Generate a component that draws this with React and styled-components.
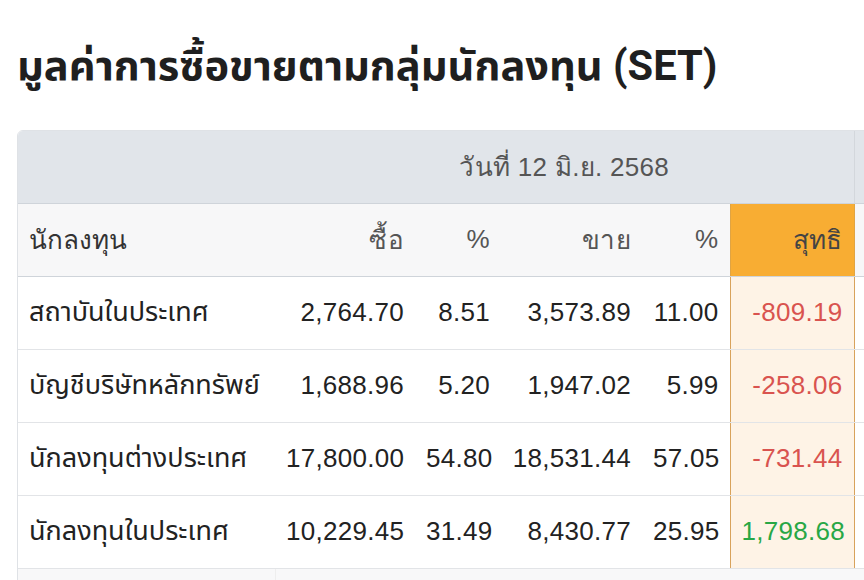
import React from 'react';
import styled, { createGlobalStyle } from 'styled-components';

const GlobalStyle = createGlobalStyle`
  html, body {
    margin: 0;
    padding: 0;
    background: #fff;
    overflow: hidden;
  }
  body {
    font-family: "Liberation Sans", "Noto Sans", sans-serif;
    color: #212529;
  }
`;

const Page = styled.div`
  width: 864px;
  height: 580px;
  overflow: hidden;
  padding: 0 0 0 17px;
  box-sizing: border-box;
`;

const Title = styled.h1`
  margin: 0;
  padding: 36px 0 0;
  height: 130px;
  box-sizing: border-box;
  font-family: Roboto, "Noto Sans Thai", sans-serif;
  font-size: 41.6px;
  font-weight: 700;
  color: #1f1f1f;
  line-height: 60px;
  white-space: nowrap;
`;

const Card = styled.div`
  width: 1000px;
  border: 1px solid #dfe2e6;
  border-radius: 6px;
  overflow: hidden;
`;

const Table = styled.table`
  border-collapse: collapse;
  table-layout: fixed;
  width: 1000px;
  font-size: 26px;
  letter-spacing: 0.3px;
`;

const Cell = styled.td`
  height: 73px;
  padding: 0 11px;
  text-align: right;
  white-space: nowrap;
  border-bottom: 1px solid #e2e4e7;
  box-sizing: border-box;
  color: #222;
`;

const NameCell = styled(Cell)`
  text-align: left;
  padding-left: 11px;
  position: relative;
  font-family: ${(p) => (p.$loopless ? 'Roboto, "Noto Sans Thai", sans-serif' : 'inherit')};
  font-size: ${(p) => (p.$loopless ? '27px' : 'inherit')};
  letter-spacing: 0;
  box-shadow: 6px 0 8px -6px rgba(0, 0, 0, 0.12);
  background: ${(p) => p.$bg || '#fff'};
`;

const HeadCell = styled(Cell)`
  height: ${(p) => (p.$top ? '72px' : '73px')};
  background: ${(p) => p.$bg};
  color: ${(p) => p.$color || '#555'};
  font-weight: 400;
  border-bottom: 1px solid #cfd4da;
`;

const NetHead = styled(HeadCell)`
  background: #f8ad33;
  color: #444;
  border-left: 1px solid #e0a443;
  border-right: 1px solid #e0a443;
`;

const NetCell = styled(Cell)`
  background: #fef3e6;
  border-left: 1px solid #d8a25b;
  border-right: 1px solid #d8a25b;
  color: ${(p) => (p.$value < 0 ? '#d9534f' : '#28a745')};
`;

const FootCell = styled.td`
  height: 24px;
  background: #f8f8f9;
  border-right: ${(p) => (p.$edge ? '1px solid #eee' : 'none')};
`;

const rows = [
  ['สถาบันในประเทศ', '2,764.70', '8.51', '3,573.89', '11.00', -809.19],
  ['บัญชีบริษัทหลักทรัพย์', '1,688.96', '5.20', '1,947.02', '5.99', -258.06],
  ['นักลงทุนต่างประเทศ', '17,800.00', '54.80', '18,531.44', '57.05', -731.44],
  ['นักลงทุนในประเทศ', '10,229.45', '31.49', '8,430.77', '25.95', 1798.68],
];

const fmt = (n) =>
  n.toLocaleString('en-US', { minimumFractionDigits: 2, maximumFractionDigits: 2 });

export default function App() {
  return (
    <Page>
      <GlobalStyle />
      <Title>มูลค่าการซื้อขายตามกลุ่มนักลงทุน (SET)</Title>
      <Card>
        <Table>
          <colgroup>
            <col style={{ width: 257 }} />
            <col style={{ width: 140 }} />
            <col style={{ width: 86 }} />
            <col style={{ width: 141 }} />
            <col style={{ width: 88 }} />
            <col style={{ width: 124 }} />
            <col style={{ width: 164 }} />
          </colgroup>
          <thead>
            <tr>
              <HeadCell as="th" $top $bg="#e1e5ea" style={{ boxShadow: '6px 0 8px -6px rgba(0,0,0,0.12)' }} />
              <HeadCell as="th" $top colSpan={5} $bg="#e1e5ea" style={{ textAlign: 'center', borderRight: '1px solid #d3d7dc' }}>
                วันที่ 12 มิ.ย. 2568
              </HeadCell>
              <HeadCell as="th" $top $bg="#e1e5ea" />
            </tr>
            <tr>
              <NameCell as="th" $bg="#f7f7f8" style={{ fontWeight: 400, color: '#333', borderBottom: '1px solid #cfd4da' }}>
                นักลงทุน
              </NameCell>
              <HeadCell as="th" $bg="#f7f7f8">ซื้อ</HeadCell>
              <HeadCell as="th" $bg="#f7f7f8">%</HeadCell>
              <HeadCell as="th" $bg="#f7f7f8">ขาย</HeadCell>
              <HeadCell as="th" $bg="#f7f7f8">%</HeadCell>
              <NetHead as="th">สุทธิ</NetHead>
              <HeadCell as="th" $bg="#f7f7f8" />
            </tr>
          </thead>
          <tbody>
            {rows.map(([name, buy, bp, sell, sp, net]) => (
              <tr key={name}>
                <NameCell $loopless>{name}</NameCell>
                <Cell>{buy}</Cell>
                <Cell>{bp}</Cell>
                <Cell>{sell}</Cell>
                <Cell>{sp}</Cell>
                <NetCell $value={net}>{fmt(net)}</NetCell>
                <Cell />
              </tr>
            ))}
            <tr>
              <FootCell $edge />
              <FootCell colSpan={6} />
            </tr>
          </tbody>
        </Table>
      </Card>
    </Page>
  );
}
